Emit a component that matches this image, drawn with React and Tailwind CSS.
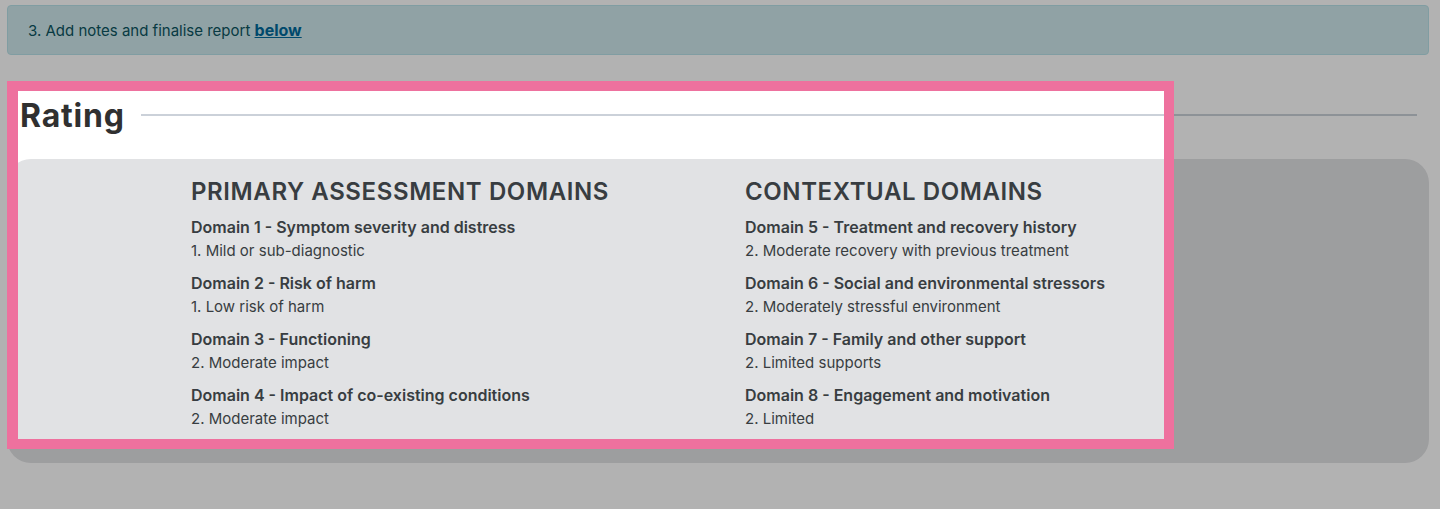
const columns = [
  {
    title: 'PRIMARY ASSESSMENT DOMAINS',
    domains: [
      ['Domain 1 - Symptom severity and distress', '1. Mild or sub-diagnostic'],
      ['Domain 2 - Risk of harm', '1. Low risk of harm'],
      ['Domain 3 - Functioning', '2. Moderate impact'],
      ['Domain 4 - Impact of co-existing conditions', '2. Moderate impact'],
    ],
  },
  {
    title: 'CONTEXTUAL DOMAINS',
    domains: [
      ['Domain 5 - Treatment and recovery history', '2. Moderate recovery with previous treatment'],
      ['Domain 6 - Social and environmental stressors', '2. Moderately stressful environment'],
      ['Domain 7 - Family and other support', '2. Limited supports'],
      ['Domain 8 - Engagement and motivation', '2. Limited'],
    ],
  },
];

function DomainColumn({ title, domains }) {
  return (
    <div>
      <h2 className="text-2xl leading-[34px] font-semibold tracking-wide">{title}</h2>
      <dl className="mt-1.5 flex flex-col gap-2">
        {domains.map(([name, rating]) => (
          <div key={name}>
            <dt className="text-[16px] leading-6 font-semibold">{name}</dt>
            <dd>{rating}</dd>
          </div>
        ))}
      </dl>
    </div>
  );
}

export default function App() {
  return (
    <main className="relative min-h-screen overflow-hidden bg-white pt-[5px] pr-[11px] pb-11 pl-[7px] font-['Inter',sans-serif] text-[15px] leading-6 text-[#383d41]">
      <p className="rounded border border-[#b8e1e8] bg-[#cee9ed] px-5 pt-[13px] pb-[11px] text-[#0c5460]">
        3. Add notes and finalise report{' '}
        <a href="#notes" className="text-[16px] leading-none font-bold text-[#00699b] underline">below</a>
      </p>

      <section className="relative mt-[26px]">
        <div className="flex items-center gap-4 pt-3 pr-3 pb-[22px] pl-[13px]">
          <h1 className="pt-0.5 text-[32px] leading-[42px] font-bold tracking-wide text-[#303030]">Rating</h1>
          <div className="h-0.5 flex-1 bg-[#cbd1d9]" />
        </div>
        <div className="grid grid-cols-[554fr_684fr] rounded-3xl bg-[#e1e2e4] pt-4 pb-8 pl-[184px]">
          {columns.map((column) => (
            <DomainColumn key={column.title} {...column} />
          ))}
        </div>
        {/* Spotlight frame: its spread shadow dims the rest of the page */}
        <div className="pointer-events-none absolute top-0 bottom-3.5 left-0 w-[82.1%] border-10 border-l-11 border-[#ee719e] shadow-[0_0_0_9999px_rgba(0,0,0,0.3)]" />
      </section>
    </main>
  );
}
